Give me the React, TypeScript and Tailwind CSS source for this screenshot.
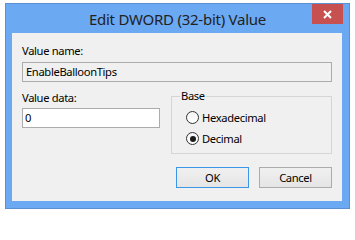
import React from "react";

function Radio({ checked, label }: { checked?: boolean; label: string }) {
  return (
    <div className="flex items-center h-[13px]">
      <div className="w-[13px] h-[13px] rounded-full border border-[#333333] bg-gradient-to-b from-[#f4f4f4] to-white flex items-center justify-center">
        {checked && <div className="w-[6px] h-[6px] rounded-full bg-[#1a1a1a]" />}
      </div>
      <span className="ml-[3px] leading-[16px]">{label}</span>
    </div>
  );
}

export default function App() {
  return (
    <div
      className="w-[355px] h-[213px] bg-white pt-[3px] pl-[5px] text-[11.2px] tracking-[-0.35px] text-black"
      style={{ fontFamily: '"Segoe UI", "Noto Sans", sans-serif' }}
    >
      <div className="w-[345px] h-[206px] bg-[#6ba9f2] border border-[#5b8fd2] flex flex-col">
        <div className="relative h-[29px] flex items-center justify-center">
          <span className="text-[15px] tracking-[-0.25px] text-[#222222] leading-[20px] mt-[1px]">
            Edit DWORD (32-bit) Value
          </span>
          <div className="absolute top-0 right-[6px] w-[31px] h-[20px] bg-[#c75050] flex items-center justify-center">
            <svg width="9" height="9" viewBox="0 0 9 9">
              <path d="M1 1 L8 8 M8 1 L1 8" stroke="white" strokeWidth="2" />
            </svg>
          </div>
        </div>
        <div className="ml-[6px] w-[330px] h-[168px] bg-[#f0f0f0] px-[10px] pt-[10px] flex flex-col">
          <div className="leading-[16px]">Value name:</div>
          <div className="mt-[3px] h-[20px] border border-[#acacac] bg-[#f0f0f0] pl-[3px] leading-[18px]">
            EnableBalloonTips
          </div>
          <div className="mt-[8px] flex">
            <div className="w-[138px] flex flex-col">
              <div className="leading-[16px]">Value data:</div>
              <div className="mt-[2px] h-[20px] border border-[#acacac] bg-white pl-[2px] leading-[18px]">
                0
              </div>
            </div>
            <div className="ml-[11px] flex-1 pt-[6px]">
              <div className="relative h-[58px] border border-[#d5d5d5] pl-[14px] pt-[14px] flex flex-col gap-[8px]">
                <span className="absolute -top-[9px] left-[8px] px-[1px] bg-[#f0f0f0] leading-[16px]">Base</span>
                <Radio label="Hexadecimal" />
                <Radio label="Decimal" checked />
              </div>
            </div>
          </div>
          <div className="mt-[13px] flex justify-end gap-[10px]">
            <div className="w-[73px] h-[21px] border border-[#3c96e8] bg-gradient-to-b from-[#f0f0f0] to-[#e5e5e5] flex items-center justify-center leading-[16px]">
              OK
            </div>
            <div className="w-[73px] h-[21px] border border-[#acacac] bg-gradient-to-b from-[#f0f0f0] to-[#e5e5e5] flex items-center justify-center leading-[16px]">
              Cancel
            </div>
          </div>
        </div>
      </div>
    </div>
  );
}
